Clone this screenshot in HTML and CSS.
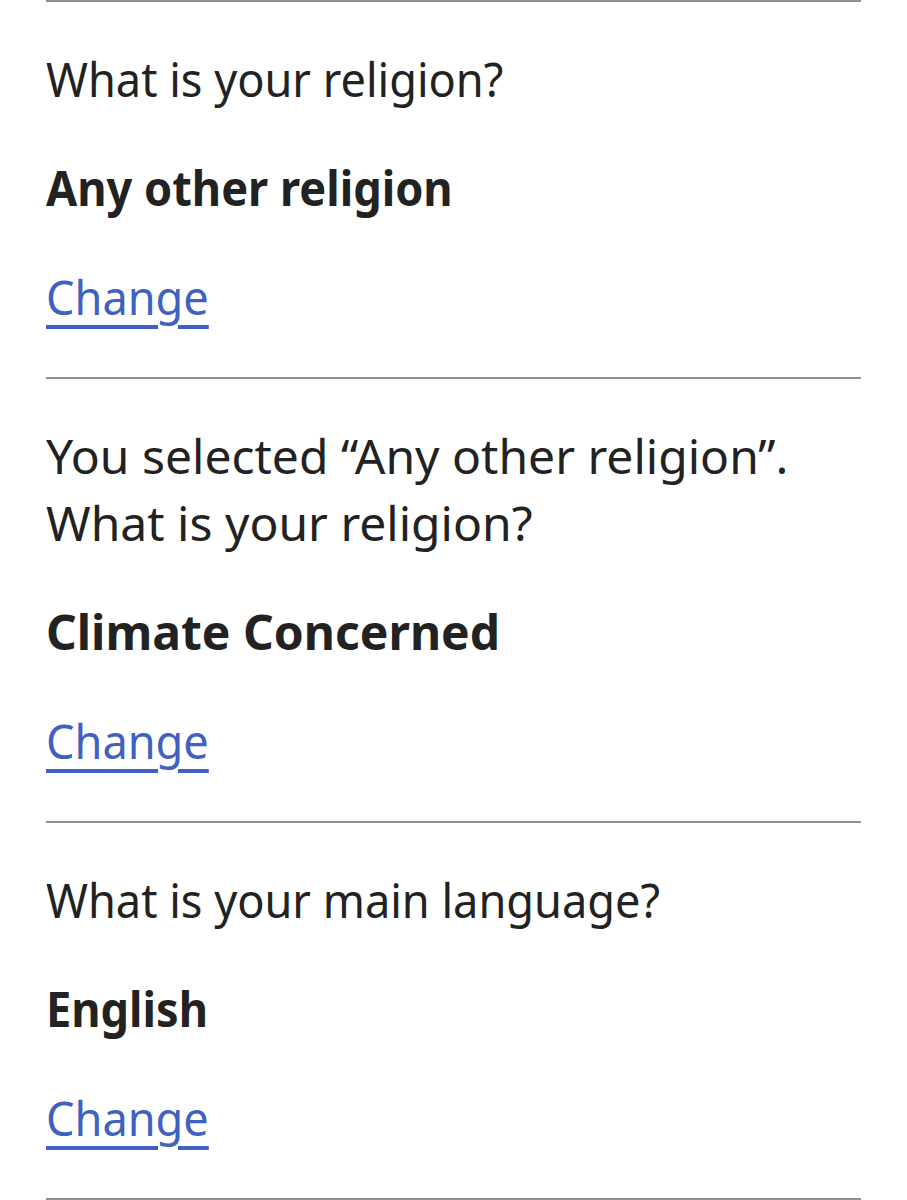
FILE: index.html
```html
<!DOCTYPE html>
<html lang="en">
<head>
<meta charset="utf-8">
<link rel="stylesheet" href="styles.css">
</head>
<body>
<dl class="summary">
  <div class="row">
    <dt class="q"><span class="cond">What is your religion?</span></dt>
    <dd class="a"><span class="cond">Any other religion</span></dd>
    <dd class="act"><a href="#" class="link cond">Change</a></dd>
  </div>
  <div class="row">
    <dt class="q">You selected “Any other religion”. What is your religion?</dt>
    <dd class="a">Climate Concerned</dd>
    <dd class="act"><a href="#" class="link cond">Change</a></dd>
  </div>
  <div class="row">
    <dt class="q"><span class="cond">What is your main language?</span></dt>
    <dd class="a"><span class="cond">English</span></dd>
    <dd class="act"><a href="#" class="link cond">Change</a></dd>
  </div>
</dl>
</body>
</html>
```

FILE: styles.css
```css
html, body {
  margin: 0;
  padding: 0;
  background: #fff;
}
body {
  font-family: "Noto Sans", "Open Sans", sans-serif;
  color: #222;
  font-size: 48px;
  line-height: 67px;
}
.summary {
  margin: 0 46px;
  width: 815px;
  border-top: 2px solid #8e8e8e;
}
.row {
  display: flex;
  flex-direction: column;
  gap: 42px;
  padding: 43px 0 47px;
  border-bottom: 2px solid #8e8e8e;
}
.q, .a, .act {
  margin: 0;
}
.q {
  max-width: 780px;
}
.a {
  font-weight: 700;
}
.cond {
  display: inline-block;
  transform: scaleX(0.94);
  transform-origin: 0 50%;
}
.link {
  color: #4061c1;
  text-decoration: underline;
  text-decoration-thickness: 4px;
  text-underline-offset: 10px;
}
```
